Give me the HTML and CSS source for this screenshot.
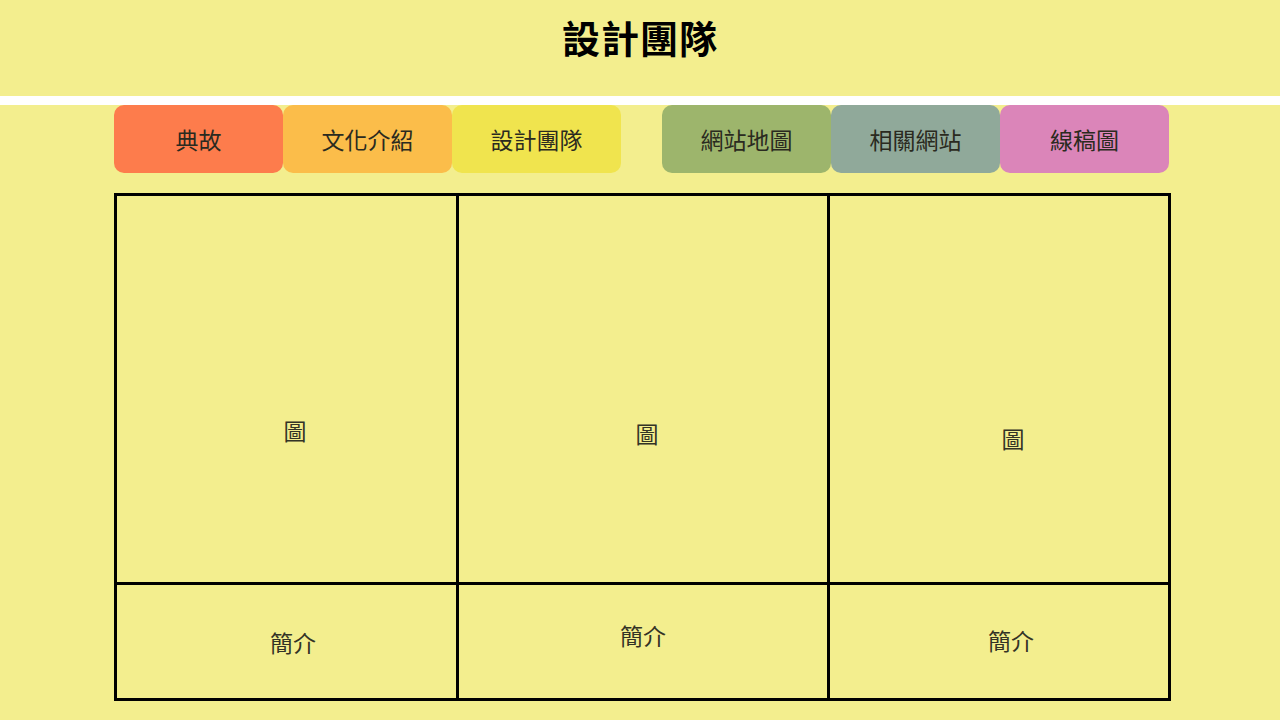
FILE: index.html
```html
<!DOCTYPE html>
<html lang="zh-Hant">
<head>
<meta charset="utf-8">
<title>設計團隊</title>
<link rel="stylesheet" href="styles.css">
</head>
<body>
<header class="header">
  <h1 class="title">設計團隊</h1>
</header>
<div class="divider"></div>
<nav class="nav">
  <a class="tab tab-1">典故</a>
  <a class="tab tab-2">文化介紹</a>
  <a class="tab tab-3">設計團隊</a>
  <a class="tab tab-4 tab-gap">網站地圖</a>
  <a class="tab tab-5">相關網站</a>
  <a class="tab tab-6">線稿圖</a>
</nav>
<main class="team">
  <div class="cell pic pic-1">圖</div>
  <div class="cell pic pic-2">圖</div>
  <div class="cell pic pic-3">圖</div>
  <div class="cell intro intro-1">簡介</div>
  <div class="cell intro intro-2">簡介</div>
  <div class="cell intro intro-3">簡介</div>
</main>
</body>
</html>
```
FILE: styles.css
```css
html, body {
  margin: 0;
  padding: 0;
  background: #f3ee8e;
  width: 1280px;
  height: 720px;
  overflow: hidden;
  font-family: "Noto Sans CJK TC", "Noto Sans CJK SC", sans-serif;
}

.header {
  height: 96px;
  display: flex;
  justify-content: center;
}

.title {
  margin: 12px 0 0;
  font-size: 38px;
  line-height: 50px;
  font-weight: 700;
  color: #000;
  letter-spacing: 1px;
}

.divider {
  height: 9px;
  background: #ffffff;
}

.nav {
  display: flex;
  padding-left: 114px;
  height: 68px;
}

.tab {
  width: 169px;
  height: 68px;
  border-radius: 10px;
  display: flex;
  align-items: center;
  justify-content: center;
  font-size: 23px;
  color: #2a2a20;
  font-weight: 400;
}

.tab-gap { margin-left: 41px; }

.tab-1 { background: #fd7c4c; }
.tab-2 { background: #fbbd4a; }
.tab-3 { background: #f0e44e; }
.tab-4 { background: #9db56c; }
.tab-5 { background: #90a99a; }
.tab-6 { background: #db85b9; }

.team {
  margin: 20px 0 0 114px;
  width: 1057px;
  height: 508px;
  box-sizing: border-box;
  padding: 3px;
  background: #000;
  display: grid;
  grid-template-columns: 339px 368px 338px;
  grid-template-rows: 386px 113px;
  gap: 3px;
}

.cell {
  background: #f3ee8e;
  display: flex;
  justify-content: center;
  align-items: center;
  font-size: 23px;
  color: #333326;
}

.pic-1 { padding-left: 17px; padding-top: 82px; }
.pic-2 { padding-left: 8px; padding-top: 88px; }
.pic-3 { padding-left: 28px; padding-top: 98px; }

.intro-1 { padding-left: 13px; }
.intro-2 { padding-bottom: 13px; }
.intro-3 { padding-left: 24px; padding-bottom: 3px; }
```
